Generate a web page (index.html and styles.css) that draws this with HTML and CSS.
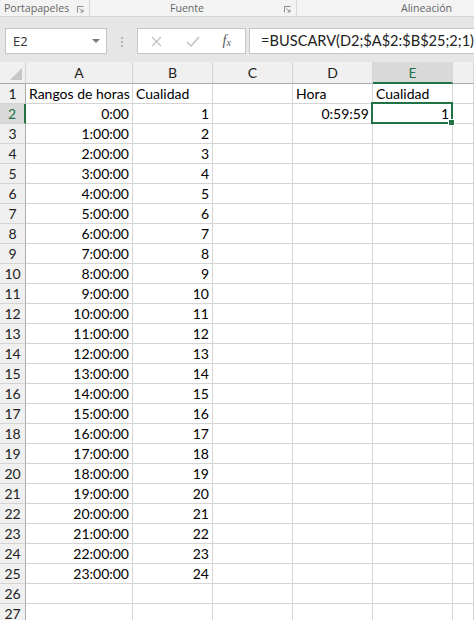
FILE: index.html
```html
<!DOCTYPE html>
<html lang="es">
<head>
<meta charset="utf-8">
<title>Excel</title>
<link rel="stylesheet" href="styles.css">
</head>
<body>
<div class="ribbon">
  <div class="grp g1"><span class="glabel">Portapapeles</span><svg class="launch" width="7" height="7" viewBox="0 0 7 7"><path d="M0.5 6.5V0.5H6.5" fill="none" stroke="#8a8a8a"/><path d="M2.5 2.5L6 6M6 3.5V6H3.5" fill="none" stroke="#8a8a8a"/></svg></div>
  <div class="grp g2"><span class="glabel">Fuente</span><svg class="launch" width="7" height="7" viewBox="0 0 7 7"><path d="M0.5 6.5V0.5H6.5" fill="none" stroke="#8a8a8a"/><path d="M2.5 2.5L6 6M6 3.5V6H3.5" fill="none" stroke="#8a8a8a"/></svg></div>
  <div class="grp g3"><span class="glabel">Alineación</span></div>
</div>
<div class="fbar">
  <div class="namebox"><span>E2</span><span class="tri"></span></div>
  <div class="dots"><i></i><i></i><i></i></div>
  <div class="icons">
    <svg width="11" height="11" viewBox="0 0 11 11"><path d="M1 1L10 10M10 1L1 10" stroke="#c2c2c2" stroke-width="1.3"/></svg>
    <svg width="14" height="11" viewBox="0 0 14 11"><path d="M1 6L5 10L13 1" fill="none" stroke="#c2c2c2" stroke-width="1.6"/></svg>
    <span class="fx">f<sub>x</sub></span>
  </div>
  <div class="formula">=BUSCARV(D2;$A$2:$B$25;2;1)</div>
</div>
<div class="sheet">
  <div class="corner"><span class="ctri"></span></div><div class="ch">A</div><div class="ch">B</div><div class="ch">C</div><div class="ch">D</div><div class="ch sel">E</div><div class="ch"></div>
  <div class="rh">1</div><div class="c">Rangos de horas</div><div class="c">Cualidad</div><div class="c"></div><div class="c">Hora</div><div class="c">Cualidad</div><div class="c"></div>
  <div class="rh sel">2</div><div class="c n">0:00</div><div class="c n">1</div><div class="c"></div><div class="c n">0:59:59</div><div class="c n act">1</div><div class="c"></div>
  <div class="rh">3</div><div class="c n">1:00:00</div><div class="c n">2</div><div class="c"></div><div class="c"></div><div class="c"></div><div class="c"></div>
  <div class="rh">4</div><div class="c n">2:00:00</div><div class="c n">3</div><div class="c"></div><div class="c"></div><div class="c"></div><div class="c"></div>
  <div class="rh">5</div><div class="c n">3:00:00</div><div class="c n">4</div><div class="c"></div><div class="c"></div><div class="c"></div><div class="c"></div>
  <div class="rh">6</div><div class="c n">4:00:00</div><div class="c n">5</div><div class="c"></div><div class="c"></div><div class="c"></div><div class="c"></div>
  <div class="rh">7</div><div class="c n">5:00:00</div><div class="c n">6</div><div class="c"></div><div class="c"></div><div class="c"></div><div class="c"></div>
  <div class="rh">8</div><div class="c n">6:00:00</div><div class="c n">7</div><div class="c"></div><div class="c"></div><div class="c"></div><div class="c"></div>
  <div class="rh">9</div><div class="c n">7:00:00</div><div class="c n">8</div><div class="c"></div><div class="c"></div><div class="c"></div><div class="c"></div>
  <div class="rh">10</div><div class="c n">8:00:00</div><div class="c n">9</div><div class="c"></div><div class="c"></div><div class="c"></div><div class="c"></div>
  <div class="rh">11</div><div class="c n">9:00:00</div><div class="c n">10</div><div class="c"></div><div class="c"></div><div class="c"></div><div class="c"></div>
  <div class="rh">12</div><div class="c n">10:00:00</div><div class="c n">11</div><div class="c"></div><div class="c"></div><div class="c"></div><div class="c"></div>
  <div class="rh">13</div><div class="c n">11:00:00</div><div class="c n">12</div><div class="c"></div><div class="c"></div><div class="c"></div><div class="c"></div>
  <div class="rh">14</div><div class="c n">12:00:00</div><div class="c n">13</div><div class="c"></div><div class="c"></div><div class="c"></div><div class="c"></div>
  <div class="rh">15</div><div class="c n">13:00:00</div><div class="c n">14</div><div class="c"></div><div class="c"></div><div class="c"></div><div class="c"></div>
  <div class="rh">16</div><div class="c n">14:00:00</div><div class="c n">15</div><div class="c"></div><div class="c"></div><div class="c"></div><div class="c"></div>
  <div class="rh">17</div><div class="c n">15:00:00</div><div class="c n">16</div><div class="c"></div><div class="c"></div><div class="c"></div><div class="c"></div>
  <div class="rh">18</div><div class="c n">16:00:00</div><div class="c n">17</div><div class="c"></div><div class="c"></div><div class="c"></div><div class="c"></div>
  <div class="rh">19</div><div class="c n">17:00:00</div><div class="c n">18</div><div class="c"></div><div class="c"></div><div class="c"></div><div class="c"></div>
  <div class="rh">20</div><div class="c n">18:00:00</div><div class="c n">19</div><div class="c"></div><div class="c"></div><div class="c"></div><div class="c"></div>
  <div class="rh">21</div><div class="c n">19:00:00</div><div class="c n">20</div><div class="c"></div><div class="c"></div><div class="c"></div><div class="c"></div>
  <div class="rh">22</div><div class="c n">20:00:00</div><div class="c n">21</div><div class="c"></div><div class="c"></div><div class="c"></div><div class="c"></div>
  <div class="rh">23</div><div class="c n">21:00:00</div><div class="c n">22</div><div class="c"></div><div class="c"></div><div class="c"></div><div class="c"></div>
  <div class="rh">24</div><div class="c n">22:00:00</div><div class="c n">23</div><div class="c"></div><div class="c"></div><div class="c"></div><div class="c"></div>
  <div class="rh">25</div><div class="c n">23:00:00</div><div class="c n">24</div><div class="c"></div><div class="c"></div><div class="c"></div><div class="c"></div>
  <div class="rh">26</div><div class="c"></div><div class="c"></div><div class="c"></div><div class="c"></div><div class="c"></div><div class="c"></div>
  <div class="rh">27</div><div class="c"></div><div class="c"></div><div class="c"></div><div class="c"></div><div class="c"></div><div class="c"></div>
</div>
</body>
</html>
```
FILE: styles.css
```css
* { box-sizing: border-box; }
html, body { margin: 0; padding: 0; }
body {
  width: 474px;
  height: 620px;
  overflow: hidden;
  background: #fff;
  font-family: Lato, "Liberation Sans", sans-serif;
}
.ribbon {
  display: flex;
  height: 17px;
  background: #f3f3f3;
  border-bottom: 1px solid #d6d6d6;
  font-family: "Open Sans", "Noto Sans", sans-serif;
  font-size: 10.6px;
  color: #666;
}
.grp {
  display: flex;
  align-items: center;
  height: 16px;
}
.g1 { width: 90px; border-right: 1px solid #d6d6d6; }
.g2 { width: 207px; border-right: 1px solid #d6d6d6; }
.g3 { flex: 1; padding-left: 104px; }
.glabel { flex: 1; text-align: center; line-height: 16px; white-space: nowrap; overflow: hidden; }
.g1 .glabel { text-align: left; padding-left: 4px; }
.g3 .glabel { text-align: left; }
.launch { margin-right: 5px; margin-top: 2px; flex: none; }
.fbar {
  display: flex;
  align-items: flex-start;
  height: 45px;
  padding-top: 11px;
  background: #e6e6e6;
}
.namebox {
  display: flex;
  align-items: center;
  justify-content: space-between;
  width: 102px;
  height: 26px;
  margin-left: 5px;
  padding: 0 6px 0 7px;
  background: #fff;
  border: 1px solid #c6c6c6;
  font-family: "Open Sans", "Noto Sans", sans-serif;
  font-size: 13px;
  color: #333;
}
.tri {
  width: 0; height: 0;
  border-left: 4px solid transparent;
  border-right: 4px solid transparent;
  border-top: 4px solid #7a7a7a;
}
.dots {
  display: flex;
  flex-direction: column;
  gap: 2px;
  margin: 9px 14px 0 14px;
}
.dots i { display: block; width: 2px; height: 2px; background: #b3b3b3; }
.icons {
  display: flex;
  align-items: center;
  width: 110px;
  height: 26px;
  padding-left: 13px;
  gap: 24px;
  background: #fff;
  border: 1px solid #c6c6c6;
}
.fx {
  font-family: "Liberation Serif", serif;
  font-style: italic;
  font-size: 14px;
  color: #555;
  margin-left: -1px;
}
.fx sub { font-size: 10px; vertical-align: -1px; }
.formula {
  flex: 1;
  height: 26px;
  margin-left: 3px;
  padding-left: 11px;
  background: #fff;
  border: 1px solid #c6c6c6;
  border-right: none;
  font-size: 14.6px;
  line-height: 24px;
  color: #222;
  white-space: nowrap;
}
.sheet {
  display: grid;
  grid-template-columns: 26px 107px 80px 80px 80px 80px 1fr;
  grid-template-rows: 22px;
  grid-auto-rows: 20px;
  font-size: 14px;
}
.corner {
  position: relative;
  background: #f0f0f0;
  border-right: 1px solid #d4d4d4;
  border-bottom: 1px solid #ababab;
}
.ctri {
  position: absolute;
  right: 3px;
  bottom: 3px;
  width: 0; height: 0;
  border-left: 12px solid transparent;
  border-bottom: 12px solid #c6c6c6;
}
.ch {
  background: #f0f0f0;
  border-right: 1px solid #d4d4d4;
  border-bottom: 1px solid #ababab;
  text-align: center;
  line-height: 22px;
  color: #222;
}
.ch.sel {
  background: #d9d9d9;
  color: #217346;
  border-bottom: 2px solid #217346;
}
.rh {
  background: #f0f0f0;
  border-right: 1px solid #ababab;
  border-bottom: 1px solid #d4d4d4;
  text-align: center;
  line-height: 20px;
  color: #222;
}
.rh.sel {
  background: #d9d9d9;
  color: #217346;
  border-right: 2px solid #217346;
}
.c {
  border-right: 1px solid #d4d4d4;
  border-bottom: 1px solid #d4d4d4;
  padding: 0 3px;
  line-height: 20px;
  white-space: nowrap;
  overflow: visible;
  color: #000;
}
.n { text-align: right; }
.act { position: relative; }
.act::after {
  content: "";
  position: absolute;
  left: -2px;
  top: -2px;
  right: -1px;
  bottom: -1px;
  border: 2px solid #217346;
}
.act::before {
  content: "";
  position: absolute;
  right: -3px;
  bottom: -3px;
  width: 5px;
  height: 5px;
  background: #217346;
  border: 1px solid #fff;
  box-sizing: content-box;
  z-index: 2;
}
```
